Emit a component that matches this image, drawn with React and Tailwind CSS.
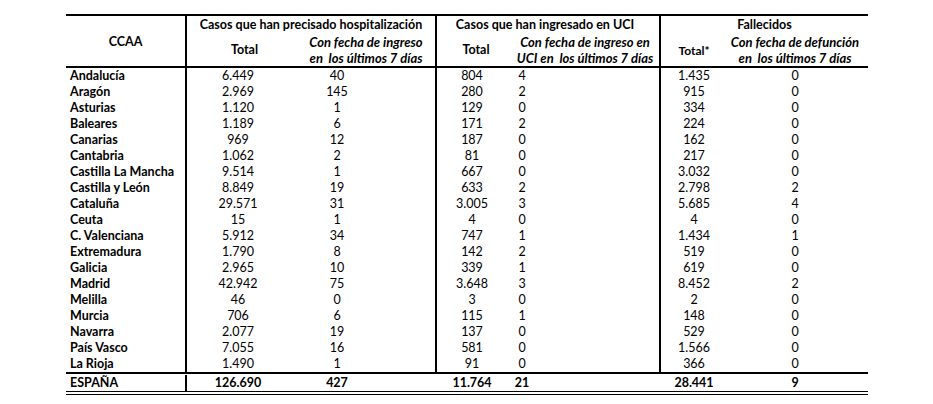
const rows = [
  ['Andalucía', '6.449', '40', '804', '4', '1.435', '0'],
  ['Aragón', '2.969', '145', '280', '2', '915', '0'],
  ['Asturias', '1.120', '1', '129', '0', '334', '0'],
  ['Baleares', '1.189', '6', '171', '2', '224', '0'],
  ['Canarias', '969', '12', '187', '0', '162', '0'],
  ['Cantabria', '1.062', '2', '81', '0', '217', '0'],
  ['Castilla La Mancha', '9.514', '1', '667', '0', '3.032', '0'],
  ['Castilla y León', '8.849', '19', '633', '2', '2.798', '2'],
  ['Cataluña', '29.571', '31', '3.005', '3', '5.685', '4'],
  ['Ceuta', '15', '1', '4', '0', '4', '0'],
  ['C. Valenciana', '5.912', '34', '747', '1', '1.434', '1'],
  ['Extremadura', '1.790', '8', '142', '2', '519', '0'],
  ['Galicia', '2.965', '10', '339', '1', '619', '0'],
  ['Madrid', '42.942', '75', '3.648', '3', '8.452', '2'],
  ['Melilla', '46', '0', '3', '0', '2', '0'],
  ['Murcia', '706', '6', '115', '1', '148', '0'],
  ['Navarra', '2.077', '19', '137', '0', '529', '0'],
  ['País Vasco', '7.055', '16', '581', '0', '1.566', '0'],
  ['La Rioja', '1.490', '1', '91', '0', '366', '0'],
]

const total = ['ESPAÑA', '126.690', '427', '11.764', '21', '28.441', '9']

// sheet columns: CCAA | hosp total | hosp 7d | (gap) | uci total | uci 7d | (gap) | fall total | fall 7d | (gap)
const cols = 'grid grid-cols-[121px_102px_96px_52px_70px_30px_124px_66px_136px_5px]'

function DataRow({ r, bold }) {
  const line = bold ? '' : 'border-r-2 border-black'
  return (
    <div className={`${cols} h-[16px] leading-[16px] text-center ${bold ? 'font-bold' : ''}`}>
      <div className="text-left pl-[4px] font-bold border-r-2 border-black">{r[0]}</div>
      <div>{r[1]}</div>
      <div>{r[2]}</div>
      <div className={line} />
      <div>{r[3]}</div>
      <div>{r[4]}</div>
      <div className={line} />
      <div>{r[5]}</div>
      <div>{r[6]}</div>
      <div />
    </div>
  )
}

export default function App() {
  return (
    <div className="w-[933px] h-[404px] bg-white text-black overflow-hidden font-['Lato','Liberation_Sans',sans-serif] text-[12.5px]">
      <div className="ml-[66px] mt-[14px] w-[802px]">
        {/* Header */}
        <div className={`${cols} grid-rows-[18px_32px] border-t-2 border-b-2 border-black font-bold leading-[16px]`}>
          <div className="row-span-2 flex items-center justify-center pt-[2px] border-r-2 border-black">CCAA</div>
          <div className="col-span-3 flex items-center justify-center border-r-2 border-black">Casos que han precisado hospitalización</div>
          <div className="col-span-3 flex items-center justify-center pr-[6px] border-r-2 border-black">Casos que han ingresado en UCI</div>
          <div className="col-span-3 flex items-center justify-center">Fallecidos</div>

          <div className="flex items-center justify-center pl-[13px]">Total</div>
          <div className="col-span-2 flex flex-col items-center justify-center pl-[8px] border-r-2 border-black italic whitespace-nowrap text-[13px]">
            <span>Con fecha de ingreso</span>
            <span>en&nbsp; los últimos 7 días</span>
          </div>
          <div className="flex items-center justify-center pl-[8px]">Total</div>
          <div className="col-span-2 flex flex-col items-center justify-center pl-[4px] border-r-2 border-black italic whitespace-nowrap text-[13px]">
            <span>Con fecha de ingreso en</span>
            <span>UCI en&nbsp; los últimos 7 días</span>
          </div>
          <div className="flex items-center justify-center text-[12px] pt-[2px]">Total*</div>
          <div className="col-span-2 flex flex-col items-center justify-center pr-[5px] italic whitespace-nowrap text-[13px]">
            <span>Con fecha de defunción</span>
            <span>en&nbsp; los últimos 7 días</span>
          </div>
        </div>

        {/* Body */}
        <div>
          {rows.map(r => <DataRow key={r[0]} r={r} />)}
        </div>

        {/* Total */}
        <div className="border-t-2 border-b border-black pt-[1px]">
          <DataRow r={total} bold />
        </div>
        <div className="h-[3px] border-b border-black" />
      </div>
    </div>
  )
}
